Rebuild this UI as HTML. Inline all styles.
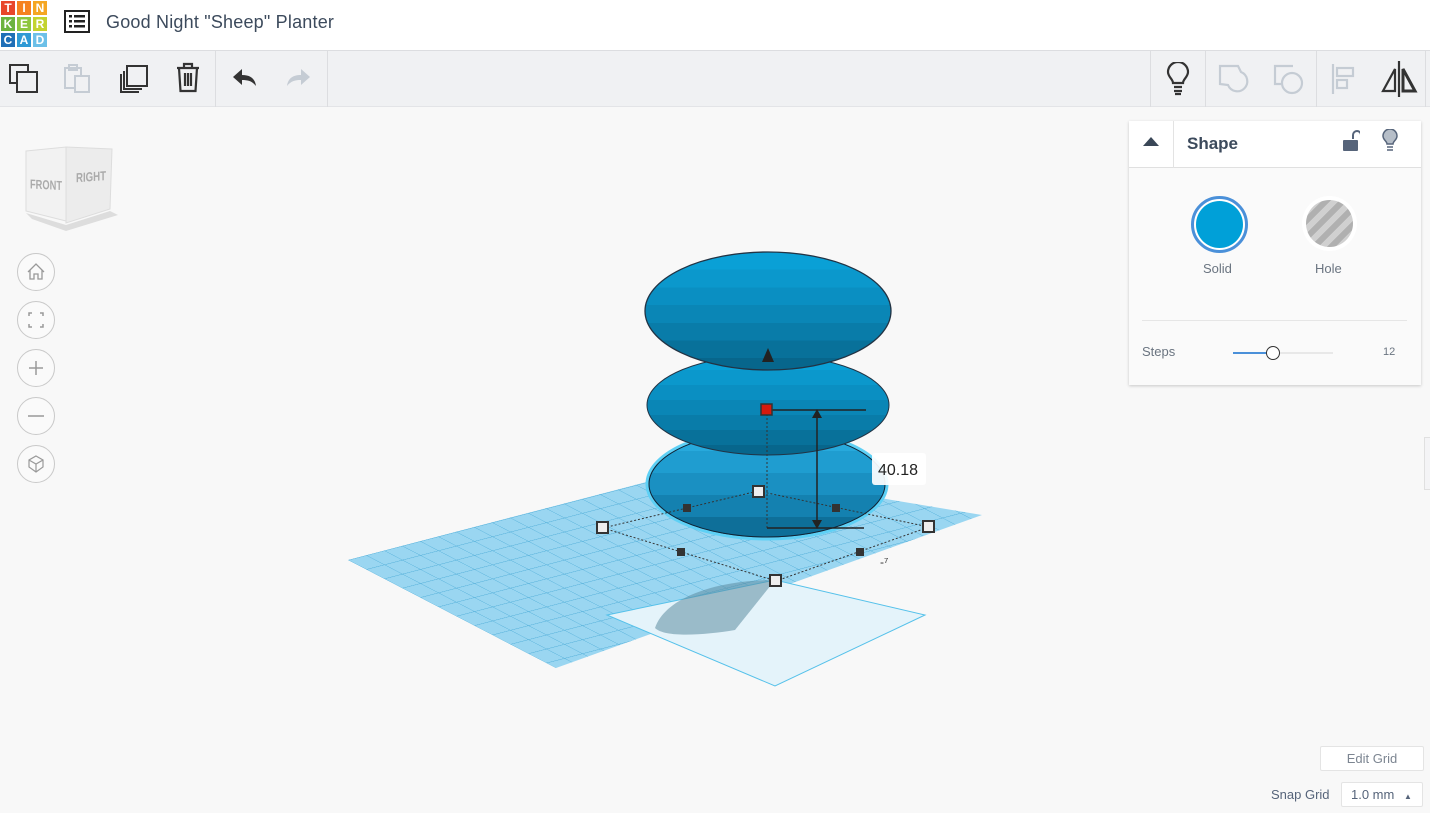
<!DOCTYPE html>
<html><head><meta charset="utf-8"><style>
*{box-sizing:border-box;margin:0;padding:0}
body{width:1430px;height:813px;overflow:hidden;background:#f8f8f8;font-family:"Liberation Sans",sans-serif;position:relative}
.hdr{position:absolute;left:0;top:0;width:1430px;height:51px;background:#fff;border-bottom:1px solid #dcdde0}
.logo{position:absolute;left:0;top:0;display:grid;grid-template-columns:16px 16px 16px;grid-template-rows:16px 16px 16px;gap:0}
.logo div{color:#fff;font-size:12px;font-weight:bold;text-align:center;line-height:15px;border:1px solid #fff}
.title{position:absolute;left:106px;top:12px;font-size:18px;color:#3c4a5c;letter-spacing:.2px}
.tb{position:absolute;left:0;top:51px;width:1430px;height:56px;background:#f0f1f3;border-bottom:1px solid #e3e4e7}
.sep{position:absolute;top:0;width:1px;height:56px;background:#dcdde0}
.ico{position:absolute}
.panel{position:absolute;left:1129px;top:121px;width:292px;height:264px;background:#fafafa;box-shadow:0 1px 3px rgba(0,0,0,.2)}
.ph{height:47px;background:#fff;border-bottom:1px solid #e0e0e0;position:relative}
.vt{position:absolute;left:17px;width:38px;height:38px;border:1px solid #c9c9c9;border-radius:50%;background:#fafafa}
.btn{position:absolute;background:#fff;border:1px solid #e4e4e4;border-radius:2px;font-size:13px;color:#7c8591;text-align:center}
</style></head><body>
<div class="hdr">
 <div class="logo">
  <div style="background:#e8462b">T</div><div style="background:#f58220">I</div><div style="background:#f5a623">N</div>
  <div style="background:#6cb33f">K</div><div style="background:#8dc63f">E</div><div style="background:#c3d32f">R</div>
  <div style="background:#1f6fb7">C</div><div style="background:#2f9ad5">A</div><div style="background:#6cc0e8">D</div>
 </div>
 <svg class="ico" style="left:64px;top:10px" width="26" height="24"><rect x="1" y="1" width="24" height="21" fill="none" stroke="#222" stroke-width="2"/><g fill="#222"><rect x="5" y="5" width="3" height="2.5"/><rect x="10" y="5" width="11" height="2.5"/><rect x="5" y="10" width="3" height="2.5"/><rect x="10" y="10" width="11" height="2.5"/><rect x="5" y="15" width="3" height="2.5"/><rect x="10" y="15" width="11" height="2.5"/></g></svg>
 <div class="title">Good Night "Sheep" Planter</div>
</div>
<div class="tb">
 <svg class="ico" style="left:9px;top:13px" width="30" height="30" fill="none" stroke="#333" stroke-width="2"><rect x="1" y="1" width="18" height="18"/><rect x="8" y="8" width="20" height="20" fill="#f0f1f3"/></svg>
 <svg class="ico" style="left:63px;top:13px" width="30" height="30" fill="none" stroke="#c5ccd4" stroke-width="2"><rect x="2" y="4" width="16" height="20"/><rect x="6" y="1" width="8" height="5"/><rect x="12" y="12" width="14" height="16" fill="#f0f1f3"/></svg>
 <svg class="ico" style="left:117px;top:13px" width="34" height="32" fill="none" stroke="#333" stroke-width="2"><path d="M4 10v18h18M7 7v18h18"/><rect x="10" y="2" width="20" height="20"/></svg>
 <svg class="ico" style="left:175px;top:11px" width="26" height="32" fill="none" stroke="#333" stroke-width="2.2"><path d="M2 6h22M9 6V2h8v4M4 6l1.5 23h15L22 6M10 11v13M13 11v13M16 11v13"/></svg>
 <div class="sep" style="left:215px"></div>
 <svg class="ico" style="left:232px;top:17px" width="26" height="20"><path d="M10 1L1 9l9 8v-5c6 0 10 1 14 6-1-7-5-11-14-11z" fill="#333"/></svg>
 <svg class="ico" style="left:285px;top:17px" width="26" height="20"><path d="M16 1l9 8-9 8v-5c-6 0-10 1-14 6 1-7 5-11 14-11z" fill="#c5ccd4"/></svg>
 <div class="sep" style="left:327px"></div>
 <div class="sep" style="left:1150px"></div>
 <svg class="ico" style="left:1165px;top:11px" width="26" height="34" fill="none" stroke="#333" stroke-width="2.2"><path d="M8 21c0-4-5-6-5-11a10 10 0 0120 0c0 5-5 7-5 11z"/><path d="M9 25h8M9 29h8M10 32h6"/></svg>
 <div class="sep" style="left:1205px"></div>
 <svg class="ico" style="left:1218px;top:13px" width="34" height="32" fill="none" stroke="#c5ccd4" stroke-width="2.2"><path d="M2 2h18l3 6a10 10 0 11-13 13L2 20z"/></svg>
 <svg class="ico" style="left:1273px;top:13px" width="34" height="32" fill="none" stroke="#c5ccd4" stroke-width="2.2"><path d="M20 2H2v18h6"/><circle cx="19" cy="19" r="10"/></svg>
 <div class="sep" style="left:1316px"></div>
 <svg class="ico" style="left:1330px;top:12px" width="30" height="32" fill="none" stroke="#c5ccd4" stroke-width="2.2"><path d="M3 1v30"/><rect x="7" y="5" width="16" height="8"/><rect x="7" y="17" width="10" height="8"/></svg>
 <svg class="ico" style="left:1380px;top:9px" width="40" height="38" fill="none" stroke="#333" stroke-width="2.2"><path d="M19 1v36"/><path d="M15 9L3 31h12z"/><path d="M23 9l12 22H23z" stroke-width="3"/></svg>
 <div class="sep" style="left:1425px"></div>
</div>

<svg class="ico" style="left:22px;top:143px" width="96" height="90">
 <polygon points="4,8 44,4 44,78 4,68" fill="#f2f2f2" stroke="#ddd"/>
 <polygon points="44,4 90,6 88,66 44,80" fill="#ececec" stroke="#ddd"/>
 <polygon points="4,70 44,82 88,68 96,72 44,88 10,76" fill="#ddd"/>
 <text x="8" y="45" font-size="13" font-weight="bold" fill="#aaa" font-family="Liberation Sans" transform="skewY(3)" textLength="32" lengthAdjust="spacingAndGlyphs">FRONT</text>
 <text x="54" y="43" font-size="13" font-weight="bold" fill="#aaa" font-family="Liberation Sans" transform="skewY(-4)" textLength="30" lengthAdjust="spacingAndGlyphs">RIGHT</text>
</svg>
<div class="vt" style="top:253px"><svg width="36" height="36" fill="none" stroke="#999" stroke-width="1.3"><path d="M10 18l8-8 8 8M12 16v9h4v-5h4v5h4v-9"/></svg></div>
<div class="vt" style="top:301px"><svg width="36" height="36" fill="none" stroke="#999" stroke-width="1.5"><path d="M11 14v-3h3M22 11h3v3M25 22v3h-3M14 25h-3v-3"/></svg></div>
<div class="vt" style="top:349px"><svg width="36" height="36" fill="none" stroke="#999" stroke-width="1.5"><path d="M18 11v14M11 18h14"/></svg></div>
<div class="vt" style="top:397px"><svg width="36" height="36" fill="none" stroke="#999" stroke-width="1.5"><path d="M10 18h16"/></svg></div>
<div class="vt" style="top:445px"><svg width="36" height="36" fill="none" stroke="#999" stroke-width="1.2"><path d="M18 10l7 4v7l-7 5-7-5v-7zM11 14l7 4 7-4M18 18v8"/></svg></div>

<svg class="ico" style="left:0;top:0" width="1430" height="813">
 <defs>
  <pattern id="g" width="18" height="18" patternUnits="userSpaceOnUse" patternTransform="matrix(1,-0.26,1,0.52,348,560)"><path d="M18 0H0V18" fill="none" stroke="#4aaad6" stroke-width="1"/></pattern>
  <linearGradient id="s1" x1="0" y1="0" x2="0" y2="1">
   <stop offset="0" stop-color="#0aa0d6"/><stop offset=".15" stop-color="#0aa0d6"/><stop offset=".15" stop-color="#0b98cc"/><stop offset=".3" stop-color="#0b98cc"/><stop offset=".3" stop-color="#0a8fc2"/><stop offset=".45" stop-color="#0a8fc2"/><stop offset=".45" stop-color="#0a86b6"/><stop offset=".6" stop-color="#0a86b6"/><stop offset=".6" stop-color="#097ca9"/><stop offset=".75" stop-color="#097ca9"/><stop offset=".75" stop-color="#08719a"/><stop offset=".9" stop-color="#08719a"/><stop offset=".9" stop-color="#07668c"/><stop offset="1" stop-color="#07668c"/></linearGradient>
  <linearGradient id="s3" x1="0" y1="0" x2="0" y2="1">
   <stop offset="0" stop-color="#27a9dc"/><stop offset=".2" stop-color="#27a9dc"/><stop offset=".2" stop-color="#1f9dd0"/><stop offset=".4" stop-color="#1f9dd0"/><stop offset=".4" stop-color="#1a90c2"/><stop offset=".6" stop-color="#1a90c2"/><stop offset=".6" stop-color="#1481b0"/><stop offset=".8" stop-color="#1481b0"/><stop offset=".8" stop-color="#0e6f99"/><stop offset="1" stop-color="#0e6f99"/></linearGradient>
 </defs>
 <polygon points="348,560 700,468 982,515 556,668" fill="#9ad6f1"/>
 <polygon points="348,560 700,468 982,515 556,668" fill="url(#g)"/>
 <polygon points="607,615 775,580 925,615 775,686" fill="#e4f3fa" stroke="#55c1ea" stroke-width="1"/>
 <path d="M655 628c10-30 60-48 120-48l-40 50c-30 5-70 8-80-2z" fill="#5d8da0" opacity=".55"/>
 <ellipse cx="767" cy="484" rx="120" ry="55" fill="url(#s3)" stroke="#5ed0f5" stroke-width="3"/>
 <ellipse cx="767" cy="484" rx="118" ry="53" fill="none" stroke="#123" stroke-width="1"/>
 <ellipse cx="768" cy="405" rx="121" ry="50" fill="url(#s1)" stroke="#234" stroke-width="1"/>
 <ellipse cx="768" cy="311" rx="123" ry="59" fill="url(#s1)" stroke="#234" stroke-width="1.3"/>
 <polygon points="768,348 762,362 774,362" fill="#222"/>
 <g fill="none" stroke="#333" stroke-width="1" stroke-dasharray="2,2">
  <path d="M603 528L776 581 929 527M603 528L758 491 929 527M767 410V528"/>
 </g>
 <g stroke="#222" stroke-width="1.5" fill="none">
  <path d="M767 410H866M767 528H864M817 412V526"/>
 </g>
 <polygon points="817,409 812,418 822,418" fill="#222"/><polygon points="817,529 812,520 822,520" fill="#222"/>
 <g fill="#eee" stroke="#333" stroke-width="2">
  <rect x="597" y="522" width="11" height="11"/><rect x="923" y="521" width="11" height="11"/><rect x="770" y="575" width="11" height="11"/><rect x="753" y="486" width="11" height="11"/>
 </g>
 <rect x="761" y="404" width="11" height="11" fill="#d61a0d" stroke="#333" stroke-width="1.5"/>
 <g fill="#333"><rect x="683" y="504" width="8" height="8"/><rect x="832" y="504" width="8" height="8"/><rect x="677" y="548" width="8" height="8"/><rect x="856" y="548" width="8" height="8"/></g>
 <rect x="872" y="453" width="54" height="32" rx="3" fill="#fff" opacity=".92"/>
 <text x="878" y="475" font-size="16" fill="#222" font-family="Liberation Sans">40.18</text>
 <text x="880" y="566" font-size="12" fill="#333" font-family="Liberation Sans">-&#x2077;</text>
</svg>

<div class="panel">
 <div class="ph">
  <svg class="ico" style="left:13px;top:15px" width="18" height="12"><polygon points="9,1 17,10 1,10" fill="#3a4757"/></svg>
  <div style="position:absolute;left:44px;top:0;width:1px;height:47px;background:#e3e3e3"></div>
  <div style="position:absolute;left:58px;top:13px;font-size:17px;font-weight:bold;color:#3c4a5c">Shape</div>
  <svg class="ico" style="left:213px;top:9px" width="18" height="22"><path d="M11 9V5a4 4 0 018 0" fill="none" stroke="#56647a" stroke-width="2"/><rect x="1" y="10" width="15" height="11" rx="1" fill="#56647a"/></svg>
  <svg class="ico" style="left:252px;top:8px" width="18" height="24"><path d="M6 15c0-3-4-4-4-8a7 7 0 0114 0c0 4-4 5-4 8z" fill="#b6bec8" stroke="#56647a" stroke-width="1.5"/><path d="M6 18h6M6 21h6" stroke="#56647a" stroke-width="1.5"/></svg>
 </div>
 <div style="position:absolute;left:62px;top:75px;width:57px;height:57px;border-radius:50%;border:3px solid #4a90d9;background:#fff"></div>
 <div style="position:absolute;left:67px;top:80px;width:47px;height:47px;border-radius:50%;background:#00a0d8"></div>
 <div style="position:absolute;left:173px;top:75px;width:55px;height:55px;border-radius:50%;background:#fff"></div>
 <div style="position:absolute;left:177px;top:79px;width:47px;height:47px;border-radius:50%;background:repeating-linear-gradient(135deg,#b0b0b0 0 6px,#d0d0d0 6px 12px)"></div>
 <div style="position:absolute;left:74px;top:140px;font-size:13px;color:#6a7480">Solid</div>
 <div style="position:absolute;left:186px;top:140px;font-size:13px;color:#6a7480">Hole</div>
 <div style="position:absolute;left:13px;top:199px;width:265px;height:1px;background:#e6e6e6"></div>
 <div style="position:absolute;left:13px;top:223px;font-size:13px;color:#6a7480">Steps</div>
 <div style="position:absolute;left:104px;top:231px;width:100px;height:2px;background:#e8e8e8"></div>
 <div style="position:absolute;left:104px;top:231px;width:40px;height:2px;background:#4a90d9"></div>
 <div style="position:absolute;left:137px;top:225px;width:14px;height:14px;border-radius:50%;background:#fff;border:1.5px solid #333"></div>
 <div style="position:absolute;left:254px;top:225px;font-size:11px;color:#6a7480">12</div>
</div>
<div style="position:absolute;left:1424px;top:437px;width:8px;height:53px;border:1px solid #e0e0e0;background:#f4f4f6"></div>

<div class="btn" style="left:1320px;top:746px;width:104px;height:25px;line-height:23px">Edit Grid</div>
<div style="position:absolute;left:1271px;top:787px;font-size:13px;color:#56647a">Snap Grid</div>
<div class="btn" style="left:1341px;top:782px;width:82px;height:25px;line-height:23px;color:#56647a;text-align:left;padding-left:9px">1.0 mm <span style="font-size:8px;margin-left:6px">&#9650;</span></div>
</body></html>
